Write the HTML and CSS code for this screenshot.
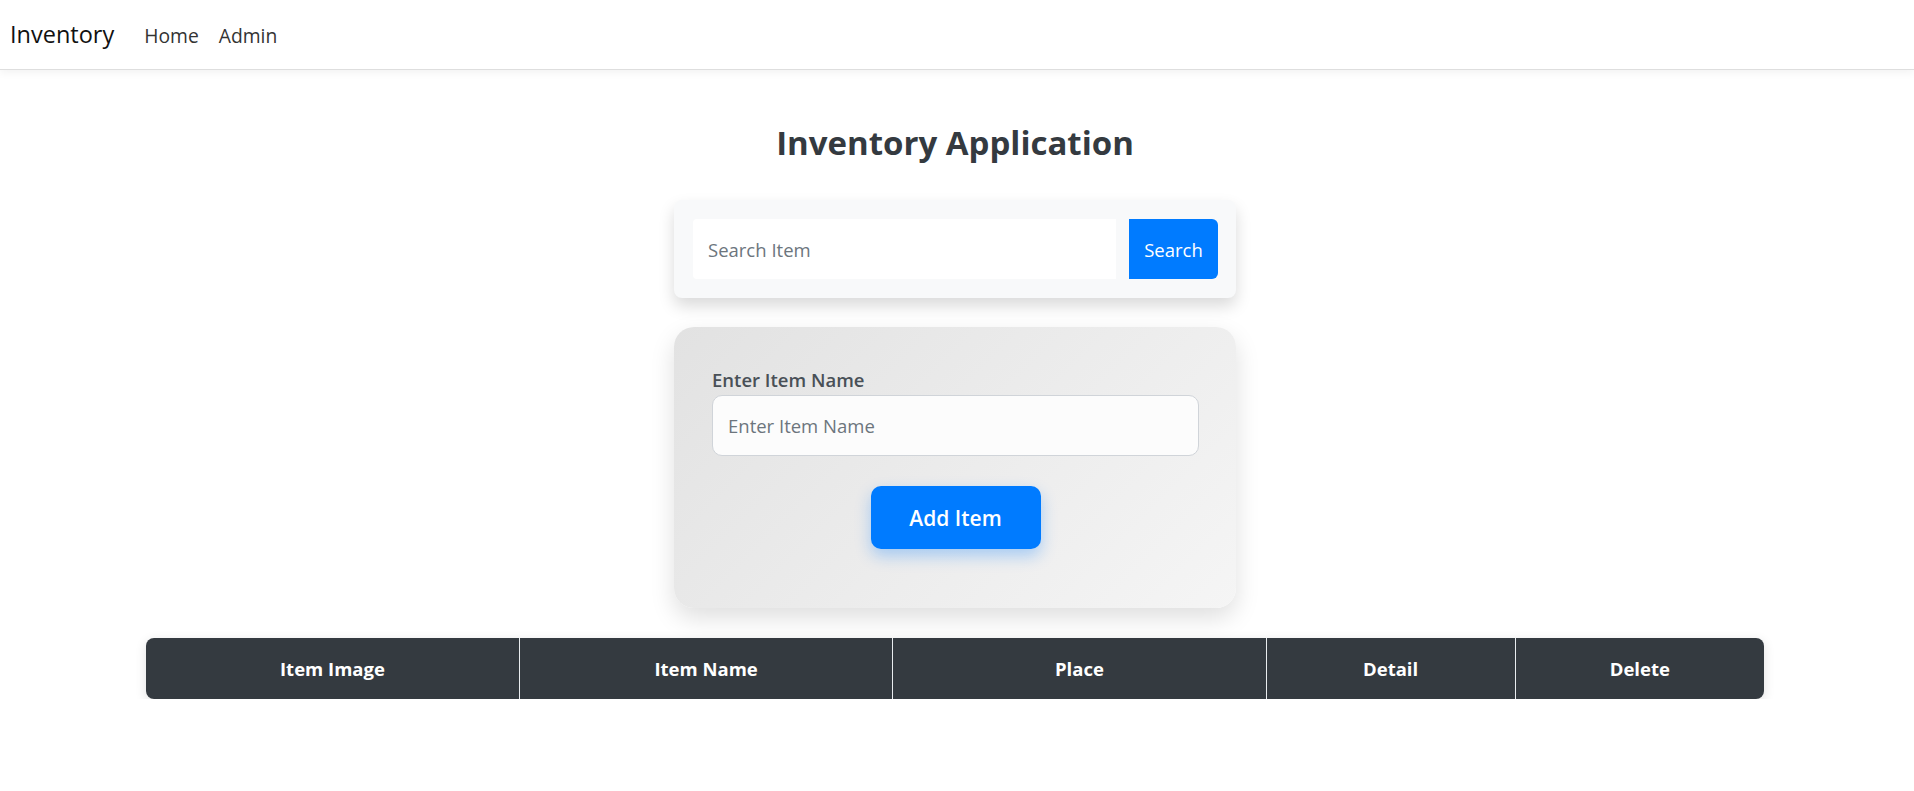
FILE: index.html
```html
<!DOCTYPE html>
<html lang="en">
<head>
<meta charset="utf-8">
<title>Inventory</title>
<link rel="stylesheet" href="styles.css">
</head>
<body>
<nav class="navbar">
  <a class="brand" href="#">Inventory</a>
  <ul class="nav-links">
    <li><a href="#">Home</a></li>
    <li><a href="#">Admin</a></li>
  </ul>
</nav>
<main class="page">
  <h1 class="title">Inventory Application</h1>
  <div class="search-card">
    <input class="search-input" type="text" placeholder="Search Item">
    <button class="search-btn">Search</button>
  </div>
  <form class="add-card">
    <label class="field-label" for="itemName">Enter Item Name</label>
    <input class="field-input" id="itemName" type="text" placeholder="Enter Item Name">
    <div class="actions">
      <button type="button" class="add-btn">Add Item</button>
    </div>
  </form>
  <div class="table-wrap">
    <table class="items">
      <colgroup>
        <col class="c3"><col class="c3"><col class="c3"><col class="c2"><col class="c2">
      </colgroup>
      <thead>
        <tr>
          <th>Item Image</th>
          <th>Item Name</th>
          <th>Place</th>
          <th>Detail</th>
          <th>Delete</th>
        </tr>
      </thead>
    </table>
  </div>
</main>
</body>
</html>
```
FILE: styles.css
```css
* { box-sizing: border-box; }
html, body { margin: 0; padding: 0; }
body {
  font-family: "Segoe UI", "Open Sans", "Noto Sans", sans-serif;
  background: #fff;
  color: #212529;
}
.navbar {
  height: 70px;
  display: flex;
  align-items: center;
  padding: 0 10px;
  background: #fff;
  border-bottom: 1px solid #dedede;
  box-shadow: 0 3px 8px rgba(0,0,0,0.05);
}
.brand {
  font-size: 23.5px;
  color: #111;
  text-decoration: none;
  margin-right: 20px;
  padding-bottom: 1px;
}
.nav-links {
  list-style: none;
  display: flex;
  margin: 0;
  padding: 0;
}
.nav-links a {
  display: block;
  padding: 1px 10px 0;
  font-size: 19.3px;
  color: #333;
  text-decoration: none;
}
.page {
  display: flex;
  flex-direction: column;
  align-items: center;
  padding-top: 50px;
  padding-right: 4px;
}
.title {
  margin: 0 0 35px;
  font-size: 33px;
  line-height: 45px;
  font-weight: 700;
  color: #343a40;
}
.search-card {
  width: 562px;
  display: flex;
  gap: 13px;
  padding: 19px 18px 19px 19px;
  background: #f8f9fa;
  border-radius: 8px;
  box-shadow: 0 8px 16px rgba(0,0,0,0.15);
}
.search-input {
  flex: 1;
  height: 60px;
  border: none;
  border-radius: 4px 0 0 4px;
  background: #fff;
  padding: 0 15px;
  font-family: inherit;
  font-size: 18.5px;
  color: #495057;
  outline: none;
}
.search-input::placeholder, .field-input::placeholder { color: #6c757d; }
.search-btn {
  width: 89px;
  height: 60px;
  border: none;
  border-radius: 0 6px 6px 0;
  background: #007bff;
  color: #fff;
  font-family: inherit;
  font-size: 18.5px;
  padding: 0;
}
.add-card {
  width: 562px;
  margin-top: 29px;
  padding: 39px 37px 59px 38px;
  border-radius: 20px;
  background: linear-gradient(135deg, #e2e2e2 0%, #f5f5f5 100%);
  box-shadow: 0 10px 24px rgba(0,0,0,0.13);
  display: flex;
  flex-direction: column;
}
.field-label {
  font-size: 18.5px;
  font-weight: 600;
  color: #495057;
  line-height: 28px;
  margin-bottom: 1px;
}
.field-input {
  height: 61px;
  border: 1px solid #d0d4d9;
  border-radius: 10px;
  background: #fcfcfc;
  padding: 0 15px;
  font-family: inherit;
  font-size: 18.5px;
  outline: none;
}
.actions {
  display: flex;
  justify-content: center;
  margin-top: 30px;
}
.add-btn {
  width: 170px;
  height: 63px;
  border: none;
  border-radius: 10px;
  background: #007bff;
  color: #fff;
  font-family: inherit;
  font-size: 21px;
  font-weight: 600;
  box-shadow: 0 7px 16px rgba(0,123,255,0.3);
}
.table-wrap {
  width: 1618px;
  margin-top: 30px;
  border-radius: 8px;
  overflow: hidden;
  box-shadow: 0 3px 12px rgba(0,0,0,0.12);
}
.items {
  width: 100%;
  border-collapse: collapse;
  table-layout: fixed;
}
.c3 { width: 23.077%; }
.c2 { width: 15.385%; }
.items th {
  height: 61px;
  background: #343a40;
  color: #fff;
  font-size: 18.5px;
  font-weight: 700;
  text-align: center;
  padding: 0;
  border-left: 1px solid #e9ecef;
}
.items th:first-child { border-left: none; }
```
